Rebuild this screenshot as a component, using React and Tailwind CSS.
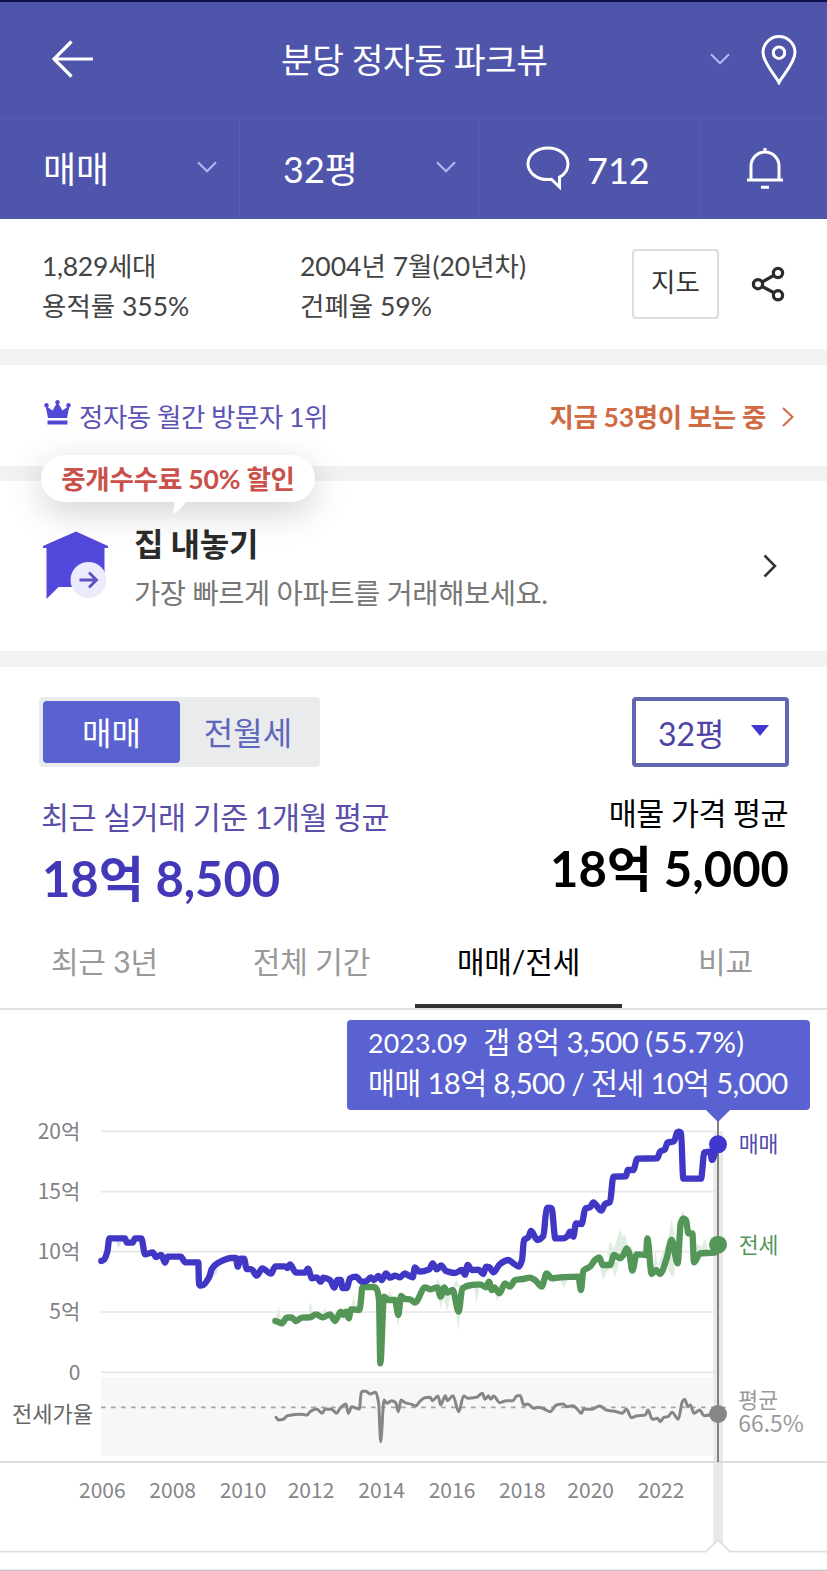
import { Fragment } from "react"

const periodTabs = ["최근 3년", "전체 기간", "매매/전세", "비교"]

const years = [
  { x: 307, label: "2006" },
  { x: 518, label: "2008" },
  { x: 729, label: "2010" },
  { x: 933, label: "2012" },
  { x: 1145, label: "2014" },
  { x: 1356, label: "2016" },
  { x: 1567, label: "2018" },
  { x: 1772, label: "2020" },
  { x: 1983, label: "2022" },
]

const priceTicks = [
  { y: 94, label: "20억" },
  { y: 275, label: "15억" },
  { y: 455, label: "10억" },
  { y: 636, label: "5억" },
  { y: 817, label: "0" },
]

const salePoints =
  "304,483 312,479 322,455 328,415 375,415 381,428 398,428 405,415 424,415 435,463 458,457 468,471 484,465 495,488 503,470 542,470 556,487 595,487 597,552 602,557 608,556 628,530 635,508 655,488 695,474 708,474 713,500 722,476 732,476 740,507 755,508 770,527 787,505 813,521 826,499 855,499 862,504 870,493 888,518 915,518 924,506 936,535 950,532 962,545 970,533 990,540 1003,563 1012,540 1022,540 1028,564 1040,564 1050,535 1068,530 1085,545 1100,543 1112,532 1122,540 1135,528 1145,540 1158,520 1170,533 1185,527 1200,532 1215,520 1225,526 1238,532 1245,502 1258,515 1288,508 1298,490 1310,508 1323,496 1338,513 1365,519 1385,510 1395,524 1403,495 1415,510 1435,509 1450,522 1458,500 1468,502 1480,517 1500,492 1525,480 1540,490 1557,500 1566,480 1572,420 1585,412 1593,393 1612,420 1630,408 1640,325 1646,323 1655,325 1666,415 1690,415 1703,408 1710,395 1720,410 1728,370 1745,372 1756,325 1770,322 1780,307 1804,332 1815,312 1830,306 1840,230 1878,229 1883,210 1900,210 1912,176 1972,175 1980,155 1995,148 2002,128 2022,124 2032,97 2038,95 2043,99 2050,236 2103,236 2113,157 2130,155 2136,180 2154,133"

const leasePoints =
  "826,663 846,670 860,653 875,652 888,663 905,653 930,652 948,643 968,652 990,643 1005,663 1022,635 1030,645 1038,635 1046,655 1053,628 1078,630 1084,590 1086,563 1094,561 1122,561 1130,568 1137,600 1141,790 1152,590 1165,600 1185,600 1195,645 1203,588 1215,597 1230,598 1245,608 1275,562 1290,568 1312,562 1322,590 1333,562 1342,578 1358,570 1376,635 1387,565 1415,555 1440,553 1458,562 1467,545 1475,570 1483,562 1498,580 1515,550 1530,560 1545,540 1570,537 1588,533 1605,540 1625,560 1640,520 1655,535 1680,532 1735,530 1743,570 1750,512 1770,500 1785,480 1798,472 1808,495 1830,495 1842,465 1860,475 1870,465 1880,445 1888,460 1897,512 1910,463 1938,465 1942,415 1955,522 1968,510 1980,522 2000,475 2015,420 2033,490 2042,370 2050,355 2058,360 2065,400 2077,400 2082,487 2100,460 2145,458 2154,433"

const ratioPoints =
  "828,952 835,960 850,958 862,947 905,943 922,945 930,935 950,927 967,940 975,927 995,928 1010,940 1020,925 1038,912 1045,940 1055,920 1078,927 1084,877 1090,874 1098,874 1110,882 1127,877 1136,910 1142,1025 1152,900 1160,910 1175,902 1187,908 1195,935 1203,900 1215,908 1235,913 1247,918 1259,905 1274,893 1291,892 1297,902 1314,888 1322,915 1336,887 1342,902 1359,887 1376,935 1391,888 1404,895 1429,892 1447,880 1455,898 1465,887 1472,898 1481,888 1499,908 1519,902 1539,902 1551,887 1561,887 1571,915 1584,912 1601,925 1614,922 1632,927 1651,935 1669,915 1689,912 1701,920 1719,917 1734,930 1744,940 1751,927 1774,928 1799,918 1819,930 1849,935 1867,940 1879,927 1894,953 1909,948 1936,945 1944,930 1957,958 1972,955 1981,965 1991,952 2004,950 2016,937 2035,958 2047,905 2054,898 2064,920 2071,915 2082,940 2099,930 2112,947 2154,942"

// deals that fall outside of the monthly average
const leaseRanges = [
  "828,655 835,618 844,655",
  "924,645 931,604 940,642",
  "968,640 975,622 982,640",
  "1052,625 1061,588 1070,622",
  "1158,592 1168,573 1180,592",
  "1188,640 1194,680 1201,635",
  "1305,560 1314,535 1325,560",
  "1315,590 1322,630 1330,590 1342,635 1352,580",
  "1358,560 1370,540 1380,560",
  "1366,620 1375,690 1384,620",
  "1422,560 1430,612 1438,560",
  "1484,575 1492,605 1500,575",
  "1680,540 1692,563 1702,540",
  "1798,490 1808,540 1822,515 1832,500 1846,530 1858,485",
  "1822,470 1828,424 1842,445 1860,388 1868,410 1876,404 1884,440 1895,440 1902,470",
  "1960,500 1966,450 1974,500 1990,450 2002,425 2014,358 2024,400 2024,532 2012,525 2000,490",
  "2038,370 2047,330 2060,365",
  "2082,440 2092,432 2104,440 2116,415 2124,452 2100,462",
]

// monotone cubic through all points, so that it never overshoots a peak
function smoothPath(points) {
  const p = points.split(" ").map((pair) => pair.split(",").map(Number))
  const slopes = p.slice(1).map(([x, y], i) => (y - p[i][1]) / (x - p[i][0]))
  const tangents = p.map((_, i) => {
    const a = slopes[i - 1]
    const b = slopes[i]
    if (a === undefined || b === undefined || a * b <= 0) return 0
    return (2 * a * b) / (a + b)
  })
  return p.slice(1).reduce((d, [x, y], i) => {
    const [x0, y0] = p[i]
    const h = (x - x0) / 3
    return `${d}C${x0 + h},${y0 + tangents[i] * h} ${x - h},${y - tangents[i + 1] * h} ${x},${y}`
  }, `M${p[0]}`)
}

function ChevronDown({ className }) {
  return (
    <svg className={className} width="20" height="12" viewBox="0 0 20 12" fill="none">
      <path d="M1 1.2 10 10.2 19 1.2" stroke="#b1b5f0" strokeWidth="2.2" />
    </svg>
  )
}

function Header() {
  return (
    <header className="h-[219px] border-t-2 border-[#0c0d4d] bg-[#4e55ab] text-white">
      <div className="flex h-[116px] items-center">
        <svg className="mb-0.5 ml-[51px] shrink-0" width="43" height="38" viewBox="0 0 43 38" fill="none">
          <path d="M20.500 1.500 3 19 20.500 36.500M3 19H42" stroke="white" strokeWidth="3.200" />
        </svg>
        <h1 className="ml-[187px] w-[270px] text-[34.500px] leading-none tracking-[-0.500px] whitespace-nowrap">분당 정자동 파크뷰</h1>
        <ChevronDown className="mb-0.5 ml-[159px]" />
        <svg className="ml-[31px]" width="36" height="50" viewBox="0 0 36 50" fill="none" stroke="white" strokeWidth="3">
          <path d="M18 47.500C15 41 2 28 2 17.500a16 16 0 0 1 32 0C34 28 21 41 18 47.500Z" />
          <circle cx="18" cy="17.700" r="5.700" />
        </svg>
      </div>
      <div className="flex h-[101px] border-t border-[#575eb5] text-[36px] leading-none">
        <div className="flex w-[240px] items-center justify-between border-r border-[#595fb6] pr-[22px] pl-[43px]">
          <span>매매</span>
          <ChevronDown className="mb-1" />
        </div>
        <div className="flex w-[239px] items-center justify-between border-r border-[#595fb6] pr-[22px] pl-[43px]">
          <span>32평</span>
          <ChevronDown className="mb-1" />
        </div>
        <div className="flex w-[221px] items-center border-r border-[#595fb6] pl-[47px]">
          <svg className="mb-0.5" width="44" height="44" viewBox="0 0 44 44" fill="none">
            <path
              d="M33.500 41 25.500 33.300C24 33.600 23 33.600 22 33.600 10.500 33.600 2 26.500 2 17.800S10.500 2 22 2s20 7.100 20 15.800c0 6-3.600 10.800-8.500 13.400Z"
              stroke="white"
              strokeWidth="3"
            />
          </svg>
          <span className="mt-0.5 ml-[17px]">712</span>
        </div>
        <div className="flex flex-1 items-center justify-center pb-0.5 pl-0.5">
          <svg width="38" height="42" viewBox="0 0 38 42" fill="none" stroke="white" strokeWidth="3">
            <path d="M1 33H37M5 33V19a14 14 0 0 1 28 0V33M19 1V5M15 40.200H23" />
          </svg>
        </div>
      </div>
    </header>
  )
}

function Info() {
  return (
    <section className="flex h-[130px] items-start pl-[42px] text-[26.500px] leading-[40px] text-[#444]">
      <div className="mt-[27px] w-[258px]">
        <p className="tracking-[-0.300px]">1,829세대</p>
        <p>용적률 355%</p>
      </div>
      <div className="mt-[27px] w-[332px]">
        <p>2004년 7월(20년차)</p>
        <p>건폐율 59%</p>
      </div>
      <div className="mt-[30px] flex h-[70px] w-[87px] justify-center rounded border-2 border-[#dcdcdc] pt-[11px] text-[#333]">지도</div>
      <svg className="mt-[47px] ml-[32px]" width="34" height="36" viewBox="0 0 34 36" fill="none" stroke="#2b2b2b" strokeWidth="3.200">
        <circle cx="7" cy="18.200" r="4.600" />
        <circle cx="27" cy="7" r="4.600" />
        <circle cx="27" cy="29.300" r="4.600" />
        <path d="m11 16 12.500-7M11 20.400l12.500 6.600" />
      </svg>
    </section>
  )
}

function Visitors() {
  return (
    <section className="flex h-[101px] items-center pl-[44px] text-[26.500px] leading-none">
      <svg className="mb-[5px]" width="27" height="26" viewBox="0 0 27 26" fill="#5148d8">
        <path d="M4 18 1.500 5.500 8.500 10.500 13.500 2 18.500 10.500 25.500 5.500 23 18ZM3.500 20.500h20v4h-20z" />
        <circle cx="2.500" cy="5.200" r="2.200" />
        <circle cx="13.500" cy="2.200" r="2.200" />
        <circle cx="24.500" cy="5.200" r="2.200" />
      </svg>
      <span className="mt-[3px] ml-[8px] tracking-[-0.480px] text-[#5b52b5]">정자동 월간 방문자 1위</span>
      <span className="mt-[3px] ml-auto font-bold tracking-[-0.350px] text-[#cf6a43]">지금 53명이 보는 중</span>
      <svg className="mt-0.5 mr-[33px] ml-[16px]" width="12" height="20" viewBox="0 0 12 20" fill="none">
        <path d="M1 1 10.500 10 1 19" stroke="#cf6a43" strokeWidth="2" />
      </svg>
    </section>
  )
}

function SellHome() {
  return (
    <section className="relative flex h-[170px] pl-[42px]">
      <div className="absolute -top-[26px] left-[41px] flex h-[47px] w-[274px] items-center justify-center rounded-full bg-white pt-[2px] text-[26.500px] leading-none font-bold tracking-[-0.200px] whitespace-nowrap text-[#c9504b] shadow-[0_10px_36px_rgba(0,0,0,0.18)]">
        중개수수료 50% 할인
        <svg className="absolute top-[46px] left-[130px]" width="16" height="13" viewBox="0 0 16 13">
          <path d="M3 0H15C12 6 7 11 1 12.500 3 8 4 4 3 0Z" fill="white" />
        </svg>
      </div>
      <svg className="mt-[49px] shrink-0" width="66" height="70" viewBox="0 0 66 70">
        <path d="M34 1.500 66 16V18H62.500V57H16.500L4.500 69V18H1V16Z" fill="#5249db" />
        <circle cx="46.500" cy="50" r="18" fill="#ebebfb" />
        <path d="M37.500 50H54M47 42.500 54.500 50 47 57.500" fill="none" stroke="#5b52c4" strokeWidth="2.800" />
      </svg>
      <div className="ml-[26px]">
        <h2 className="mt-[45px] text-[32px] leading-[36px] font-bold tracking-[-0.300px] text-[#2b2b2b]">집 내놓기</h2>
        <p className="mt-[13px] text-[28.500px] leading-[36px] tracking-[-0.440px] text-[#777]">가장 빠르게 아파트를 거래해보세요.</p>
      </div>
      <svg className="mt-[73px] mr-[50px] ml-auto" width="14" height="24" viewBox="0 0 14 24" fill="none">
        <path d="M1.500 1.500 12 12 1.500 22.500" stroke="#333" strokeWidth="2.500" />
      </svg>
    </section>
  )
}

function PriceSummary() {
  return (
    <section className="pt-[30px] pr-[38px] pl-[39px]">
      <div className="flex h-[70px] justify-between text-[32px] leading-none">
        <div className="flex w-[281px] rounded bg-[#e9ebed] p-1 text-[#5d66bd]">
          <div className="flex w-[137px] items-center justify-center rounded bg-[#5a61d0] pt-0.5 text-white">매매</div>
          <div className="flex flex-1 items-center justify-center pt-0.5">전월세</div>
        </div>
        <div className="flex w-[157px] items-center rounded border-4 border-[#6267b5] pl-[22px] text-[#4d43a5]">
          <span className="mt-1">32평</span>
          <svg className="mb-1 ml-[26px]" width="18" height="11" viewBox="0 0 18 11">
            <path d="M0 0H18L9 11Z" fill="#4336d0" />
          </svg>
        </div>
      </div>
      <div className="flex justify-between pl-[2px]">
        <div className="mt-[30px] text-[#5a4fa8]">
          <p className="text-[30.500px] leading-[40px] tracking-[-0.600px]">최근 실거래 기준 1개월 평균</p>
          <p className="mt-[3px] pl-px text-[49px] leading-[76px] font-bold tracking-[-0.100px] text-[#4338b8]">18억 8,500</p>
        </div>
        <div className="mt-[26px] text-right text-black">
          <p className="pr-px text-[30.500px] leading-[40px] tracking-[-0.600px]">매물 가격 평균</p>
          <p className="-mt-[3px] text-[49px] leading-[76px] font-bold">18억 5,000</p>
        </div>
      </div>
    </section>
  )
}

function PeriodTabs() {
  return (
    <nav className="mt-[2px] flex h-[92px] border-b-2 border-[#e2e2e2] pl-px text-[30px] leading-none">
      {periodTabs.map((tab) => (
        <div
          key={tab}
          className={`flex w-[207px] shrink-0 justify-center pt-[28px] tracking-[-0.150px] ${
            tab === "매매/전세" ? "border-b-4 border-[#333] text-black" : "text-[#999]"
          }`}
        >
          {tab}
        </div>
      ))}
    </nav>
  )
}

function PriceChart() {
  return (
    <section className="relative h-[562px]">
      <svg className="block font-['Noto_Sans_CJK_KR',sans-serif]" width="827" height="561" viewBox="0 -270 2481 1683" fontSize="63">
        {/* selected month */}
        <rect x="2140" y="94" width="29" height="1260" fill="#e9e9e9" />
        <rect x="303" y="833" width="1837" height="234" fill="#f7f7f7" />

        {priceTicks.map((tick) => (
          <Fragment key={tick.label}>
            <path d={`M303 ${tick.y}H2154`} stroke="#e6e6e6" strokeWidth="5" />
            <text x="241" y={tick.y + 22} textAnchor="end" fill="#808085">
              {tick.label}
            </text>
          </Fragment>
        ))}

        {leaseRanges.map((points) => (
          <polygon key={points} points={points} fill="#dfeee0" />
        ))}
        <polygon points="345,420 356,445 366,420" fill="#dddcf5" />
        <polygon points="625,545 650,520 655,495 632,515" fill="#dddcf5" />

        <path d="M303 922H2184" stroke="#a6a6a6" strokeWidth="5" strokeDasharray="14 16" />
        <text x="36" y="965" fontSize="66" fill="#666">전세가율</text>
        <path d="M0 1086H2481" stroke="#dcdcdc" strokeWidth="6" />
        <path d="M2154 60V1086" stroke="#828282" strokeWidth="6" />

        <g fill="none" strokeLinejoin="round" strokeLinecap="round">
          <path d={smoothPath(leasePoints)} stroke="#549558" strokeWidth="19" />
          <path d={smoothPath(salePoints)} stroke="#4037c4" strokeWidth="19" />
          <path d={smoothPath(ratioPoints)} stroke="#868686" strokeWidth="9" />
        </g>
        <circle cx="2154" cy="133" r="27" fill="#4037d0" />
        <circle cx="2154" cy="434" r="27" fill="#549558" />
        <circle cx="2154" cy="942" r="27" fill="#868686" />

        <text x="2216" y="155" fontSize="65" fill="#5148a8">매매</text>
        <text x="2216" y="458" fontSize="65" fill="#549558">전세</text>
        <text fontSize="65" fill="#999">
          <tspan x="2215" y="923">평균</tspan>
          <tspan x="2215" y="995" fontSize="68.5">66.5%</tspan>
        </text>

        {years.map((year) => (
          <text key={year.label} x={year.x} y="1193" textAnchor="middle" fill="#85858a">
            {year.label}
          </text>
        ))}

        <path d="M0 1355H2118L2154 1320L2190 1355H2481" fill="white" stroke="#dedede" strokeWidth="5" />
        <path d="M0 1411H2481" stroke="#c4c4c4" strokeWidth="4" />
      </svg>

      <div className="absolute top-[10px] left-[347px] h-[90px] w-[463px] rounded bg-[#5a61d0] pt-[2px] pl-[21px] text-[29.300px] leading-[40px] whitespace-pre text-white">
        <p className="tracking-[-0.550px]">
          <span className="mr-[15px] text-[26.700px] tracking-[0.150px]">2023.09</span>
          갭 8억 3,500 <span className="tracking-[0.300px]">(55.7%)</span>
        </p>
        <p className="tracking-[-0.650px]">매매 18억 8,500 / 전세 10억 5,000</p>
        <svg className="absolute top-[89px] left-[358px]" width="26" height="13" viewBox="0 0 26 13">
          <path d="M0 0H26L13 13Z" fill="#5a61d0" />
        </svg>
      </div>
    </section>
  )
}

export default function App() {
  return (
    <div className="h-[1571px] w-[827px] overflow-hidden bg-white font-['Lato','Noto_Sans_CJK_KR',sans-serif]">
      <Header />
      <Info />
      <div className="h-4 bg-[#f2f2f2]" />
      <Visitors />
      <div className="h-[15px] bg-[#f2f2f2]" />
      <SellHome />
      <div className="h-4 bg-[#f2f2f2]" />
      <PriceSummary />
      <PeriodTabs />
      <PriceChart />
    </div>
  )
}
